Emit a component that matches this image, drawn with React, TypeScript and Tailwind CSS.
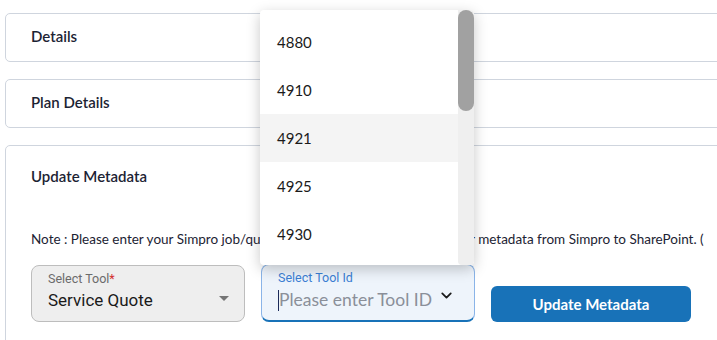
import { ChevronDown } from 'lucide-react';

const toolIds = ['4880', '4910', '4921', '4925', '4930'];

function Panel({ title }: { title: string }) {
  return (
    <div className="w-[760px] h-[49px] border border-[#cfd5de] rounded-[5px] flex items-center pl-[25px]">
      <span className="text-[15px] font-semibold text-[#1c2333] -mt-[2px]">{title}</span>
    </div>
  );
}

function ToolIdMenu() {
  return (
    <div className="absolute left-[260px] top-[10px] w-[214px] h-[255px] bg-white rounded-[4px] shadow-[0_4px_14px_rgba(0,0,0,0.22)] flex overflow-hidden">
      <ul className="flex-1 pt-[8px]">
        {toolIds.map((id) => (
          <li
            key={id}
            className={`h-[48px] flex items-center pl-[17px] text-[15px] text-[#1a1a1a] ${
              id === '4921' ? 'bg-[#f4f4f4]' : ''
            }`}
          >
            {id}
          </li>
        ))}
      </ul>
      <div className="w-[16px] bg-[#efefef] rounded-b-[4px] relative">
        <div className="absolute top-0 left-0 w-[16px] h-[101px] bg-[#a1a1a1] rounded-full" />
      </div>
    </div>
  );
}

export default function App() {
  return (
    <div className="relative w-[717px] h-[340px] overflow-hidden bg-white font-['Lato','Noto_Sans',sans-serif]">
      <div className="flex flex-col gap-[17px] pl-[5px] pt-[13px]">
        <Panel title="Details" />
        <Panel title="Plan Details" />

        <div className="w-[760px] h-[220px] border border-[#cfd5de] rounded-[5px] pl-[25px] pt-[19px]">
          <h3 className="text-[15px] font-semibold text-[#1c2333] leading-[22px]">Update Metadata</h3>
          <p className="mt-[42px] text-[13.5px] text-[#1c2333] leading-[20px] whitespace-nowrap">
            Note : Please enter your Simpro job/quote ID in the box below to sync your metadata from Simpro to SharePoint. (
          </p>

          <div className="mt-[16px] flex items-start gap-[16px]">
            <div className="w-[214px] h-[57px] bg-[#eeeeee] border border-[#bdbdbd] rounded-[8px] pl-[16px] pr-[14px] pt-[5px] font-['Roboto',sans-serif] relative">
              <div className="text-[12.5px] text-[#6b6b6b] leading-[16px]">
                Select Tool<span className="text-[#d32f2f]">*</span>
              </div>
              <div className="text-[17px] text-[#1a1a1a] leading-[24px] mt-[1px]">Service Quote</div>
              <span className="absolute right-[15px] top-[30px] w-0 h-0 border-l-[5px] border-r-[5px] border-t-[5px] border-l-transparent border-r-transparent border-t-[#757575]" />
            </div>

            <div className="-mt-[1px] w-[214px] h-[58px] bg-[#eef4fb] border border-[#8ab4e8] border-b-[2px] border-b-[#1872b8] rounded-[8px] pl-[16px] pt-[5px] font-['Roboto',sans-serif] relative">
              <div className="text-[12.5px] text-[#3b7fd4] leading-[16px]">Select Tool Id</div>
              <div className="flex items-center mt-[2px]">
                <span className="w-[1px] h-[21px] bg-[#1c2b5a]" />
                <span className="text-[17.5px] text-[#8a8f99] leading-[24px] font-['Lato','Noto_Sans',sans-serif]">Please enter Tool ID</span>
              </div>
              <ChevronDown className="absolute right-[19px] top-[22px] w-[17px] h-[17px] text-[#1a1a1a]" strokeWidth={2.5} />
            </div>

            <button className="mt-[21px] w-[200px] h-[36px] bg-[#1872b8] rounded-[6px] text-white text-[15px] font-bold">
              Update Metadata
            </button>
          </div>
        </div>
      </div>

      <ToolIdMenu />
    </div>
  );
}
